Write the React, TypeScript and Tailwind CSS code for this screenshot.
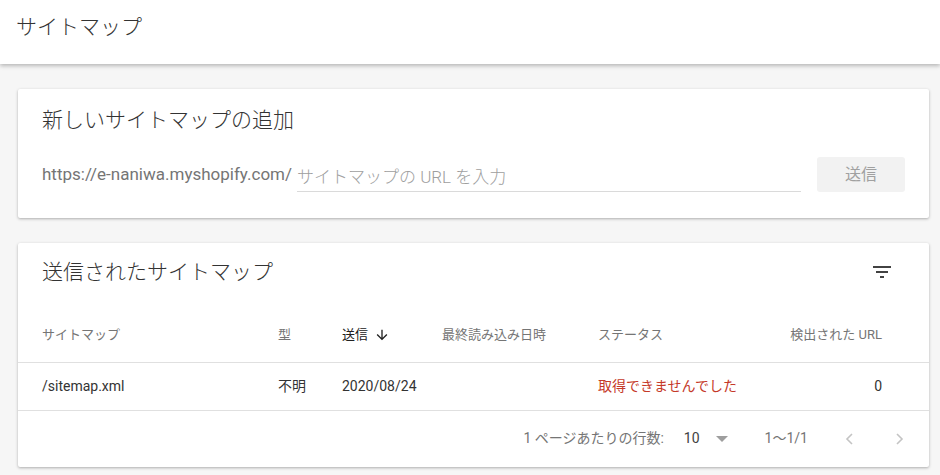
import React from "react";

const font = { fontFamily: 'Roboto, "Noto Sans CJK JP", sans-serif' };

function FilterIcon() {
  return (
    <svg width="24" height="24" viewBox="0 0 24 24" className="text-[#424242]">
      <path fill="currentColor" d="M10 18h4v-2h-4v2zM3 6v2h18V6H3zm3 7h12v-2H6v2z" />
    </svg>
  );
}

function ArrowDown() {
  return (
    <svg width="16" height="16" viewBox="0 0 24 24" className="text-[#212121]">
      <path fill="currentColor" d="M20 12l-1.41-1.41L13 16.17V4h-2v12.17l-5.58-5.59L4 12l8 8 8-8z" />
    </svg>
  );
}

function Chevron({ dir }: { dir: "left" | "right" }) {
  return (
    <svg width="24" height="24" viewBox="0 0 24 24" className="text-[#c4c4c4]">
      <path
        fill="none"
        stroke="currentColor"
        strokeWidth="1.6"
        d={dir === "left" ? "M14 7l-5 5 5 5" : "M10 7l5 5-5 5"}
      />
    </svg>
  );
}

export default function App() {
  return (
    <div className="min-h-[475px] bg-[#f6f6f6] text-[#212121]" style={font}>
      {/* Header */}
      <div className="h-[64px] bg-white shadow-[0_2px_4px_rgba(0,0,0,0.25)] flex items-center pl-[16px] relative">
        <h1 className="text-[21px] font-light text-[#333] leading-[28px] -mt-[11px]">サイトマップ</h1>
      </div>

      <div className="pt-[25px] pl-[18px] pr-[11px] flex flex-col gap-[25px]">
        {/* Add sitemap card */}
        <div className="bg-white rounded-[2px] shadow-[0_1px_3px_rgba(0,0,0,0.3)] h-[129px] px-[24px] pt-[17px]">
          <h2 className="text-[21px] font-light leading-[28px] text-[#333]">新しいサイトマップの追加</h2>
          <div className="mt-[23px] flex items-center h-[35px]">
            <span className="text-[17px] text-[#757575] whitespace-nowrap">https://e-naniwa.myshopify.com/</span>
            <div className="ml-[5px] flex-1 h-[35px] flex items-end border-b border-[#dadada]">
              <span className="text-[17px] font-light text-[#9e9e9e] pb-[1px]">サイトマップの URL を入力</span>
            </div>
            <button className="ml-[16px] w-[88px] h-[35px] rounded-[3px] bg-[#f2f2f2] text-[16px] text-[#a0a0a0]">
              送信
            </button>
          </div>
        </div>

        {/* Submitted sitemaps card */}
        <div className="bg-white rounded-[2px] shadow-[0_1px_3px_rgba(0,0,0,0.3)] h-[224px]">
          <div className="flex items-center justify-between pl-[24px] pr-[35px] pt-[15px] h-[43px]">
            <h2 className="text-[21px] font-light leading-[28px] text-[#333]">送信されたサイトマップ</h2>
            <FilterIcon />
          </div>

          <div className="mt-[21px] grid grid-cols-[236px_64px_100px_156px_1fr_auto] items-center h-[56px] pl-[24px] pr-[47px] border-b border-[#e0e0e0] text-[13px] text-[#757575]">
            <span>サイトマップ</span>
            <span>型</span>
            <span className="flex items-center gap-[6px] text-[#212121]">
              送信 <ArrowDown />
            </span>
            <span>最終読み込み日時</span>
            <span>ステータス</span>
            <span className="text-right">検出された URL</span>
          </div>

          <div className="grid grid-cols-[236px_64px_100px_156px_1fr_auto] items-center h-[48px] pl-[24px] pr-[47px] border-b border-[#e0e0e0] text-[14px] text-[#333]">
            <span>/sitemap.xml</span>
            <span>不明</span>
            <span>2020/08/24</span>
            <span></span>
            <span className="text-[#c53929]">取得できませんでした</span>
            <span className="text-right">0</span>
          </div>

          <div className="flex items-center justify-end h-[55px] pr-[18px] text-[14px] text-[#757575]">
            <span>1 ページあたりの行数:</span>
            <span className="ml-[20px] text-[#424242]">10</span>
            <span className="ml-[16px] w-0 h-0 border-l-[6px] border-r-[6px] border-t-[6px] border-l-transparent border-r-transparent border-t-[#9e9e9e]" />
            <span className="ml-[37px]">1〜1/1</span>
            <div className="ml-[30px] flex items-center gap-[25px]">
              <Chevron dir="left" />
              <Chevron dir="right" />
            </div>
          </div>
        </div>
      </div>
    </div>
  );
}
